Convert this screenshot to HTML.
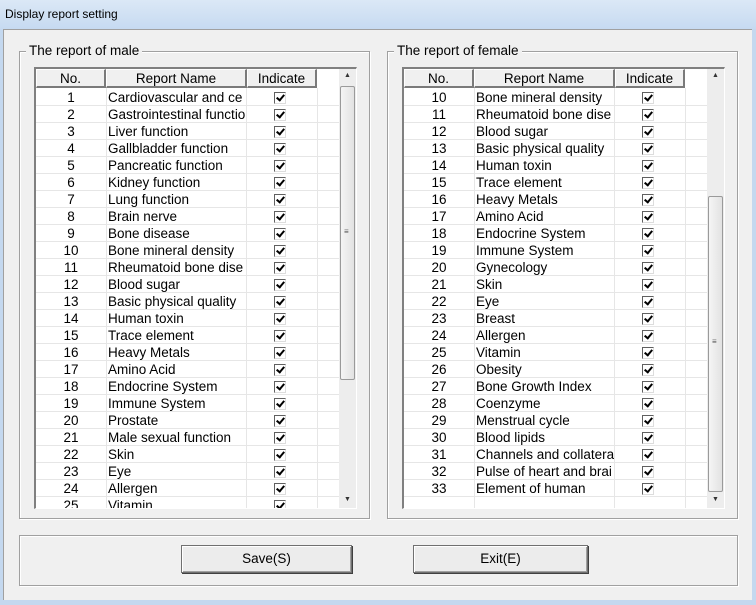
<!DOCTYPE html>
<html><head><meta charset="utf-8">
<style>
*{box-sizing:border-box;margin:0;padding:0}
body{width:756px;height:605px;overflow:hidden;background:#f0f0f0;font-family:"Liberation Sans",Arial,sans-serif;font-size:13px;color:#000;position:relative}
.title{position:absolute;left:0;top:0;width:756px;height:29px;background:linear-gradient(#dbe8f6,#c6daf1);}
.title span{position:absolute;left:5px;top:7px;font-size:12px}
.bl{position:absolute;left:0;top:29px;width:3px;height:576px;background:#c4d8ef}
.br{position:absolute;right:0;top:29px;width:4px;height:576px;background:#c4d8ef}
.bb{position:absolute;left:0;top:600px;width:756px;height:5px;background:#c4d8ef}
.inner{position:absolute;left:3px;top:29px;width:749px;height:571px;border-left:1px solid #a0a0a0;border-top:1px solid #a0a0a0}
.grp{position:absolute;border:1px solid #a0a0a0;box-shadow:inset 1px 1px 0 #fff,1px 1px 0 #fff}
.gt{position:absolute;top:-9px;left:6px;background:#f0f0f0;padding:0 3px;font-size:13.5px}
.grid{position:absolute;width:323px;height:442px;background:#fff;border-left:2px solid #808080;border-top:2px solid #808080;border-right:1px solid #fff;border-bottom:1px solid #fff;overflow:hidden}
.hdr{position:absolute;left:0;top:0;height:19px;width:281px;background:#f0f0f0;}
.hc{position:absolute;top:0;height:19px;text-align:center;line-height:18px;border-right:2px solid #7a7a7a;border-bottom:2px solid #7a7a7a;border-left:1px solid #fff;border-top:1px solid #fff;font-size:13.5px;background:#f0f0f0}
.row{position:absolute;left:0;height:17px;width:303px;border-bottom:1px solid #e6e6e6}
.row span{position:absolute;top:0;line-height:17px;font-size:13.5px}
.n{left:0;width:70px;text-align:center}
.nm{left:72px;width:138px;white-space:nowrap;overflow:hidden}
.cb{position:absolute;left:238px;top:3px;width:12px;height:12px;border:1px solid #606060;border-right-color:#ddd;border-bottom-color:#ddd;background:#fff}
.cb::after{content:"";position:absolute;left:3px;top:0px;width:3px;height:6px;border-right:2.5px solid #000;border-bottom:2.5px solid #000;transform:rotate(40deg)}
.vl{position:absolute;top:19px;width:1px;height:430px;background:#e6e6e6}
.sb{position:absolute;right:0;top:0;width:17px;height:440px;background:#ededed}
.thumb{position:absolute;left:1px;width:15px;background:linear-gradient(90deg,#f5f5f5,#e2e2e2);border:1px solid #9a9a9a;border-radius:2px}
.ar{position:absolute;left:5px;font-size:7px;color:#333}
.btn{position:absolute;top:545px;height:28px;border:1px solid #707070;background:#ececec;box-shadow:inset 1px 1px 0 #fff,inset -1px -1px 0 #a0a0a0,1px 1px 0 #404040;text-align:center;line-height:26px;font-size:13.5px}
</style></head><body>
<div class="title"><span>Display report setting</span></div>
<div class="bl"></div><div class="br"></div><div class="bb"></div>
<div class="inner"></div>

<div class="grp" style="left:19px;top:51px;width:351px;height:468px"><div class="gt">The report of male</div></div>
<div class="grp" style="left:387px;top:51px;width:351px;height:468px"><div class="gt">The report of female</div></div>
<div class="grp" style="left:19px;top:535px;width:719px;height:51px"></div>

<div class="grid" style="left:34px;top:67px">
<div class="hdr"></div>
<div class="vl" style="left:70px"></div><div class="vl" style="left:210px"></div><div class="vl" style="left:281px"></div>
<div class="row" style="top:20px"><span class="n">1</span><span class="nm">Cardiovascular and ce</span><div class="cb"></div></div>
<div class="row" style="top:37px"><span class="n">2</span><span class="nm">Gastrointestinal functio</span><div class="cb"></div></div>
<div class="row" style="top:54px"><span class="n">3</span><span class="nm">Liver function</span><div class="cb"></div></div>
<div class="row" style="top:71px"><span class="n">4</span><span class="nm">Gallbladder function</span><div class="cb"></div></div>
<div class="row" style="top:88px"><span class="n">5</span><span class="nm">Pancreatic function</span><div class="cb"></div></div>
<div class="row" style="top:105px"><span class="n">6</span><span class="nm">Kidney function</span><div class="cb"></div></div>
<div class="row" style="top:122px"><span class="n">7</span><span class="nm">Lung function</span><div class="cb"></div></div>
<div class="row" style="top:139px"><span class="n">8</span><span class="nm">Brain nerve</span><div class="cb"></div></div>
<div class="row" style="top:156px"><span class="n">9</span><span class="nm">Bone disease</span><div class="cb"></div></div>
<div class="row" style="top:173px"><span class="n">10</span><span class="nm">Bone mineral density</span><div class="cb"></div></div>
<div class="row" style="top:190px"><span class="n">11</span><span class="nm">Rheumatoid bone dise</span><div class="cb"></div></div>
<div class="row" style="top:207px"><span class="n">12</span><span class="nm">Blood sugar</span><div class="cb"></div></div>
<div class="row" style="top:224px"><span class="n">13</span><span class="nm">Basic physical quality</span><div class="cb"></div></div>
<div class="row" style="top:241px"><span class="n">14</span><span class="nm">Human toxin</span><div class="cb"></div></div>
<div class="row" style="top:258px"><span class="n">15</span><span class="nm">Trace element</span><div class="cb"></div></div>
<div class="row" style="top:275px"><span class="n">16</span><span class="nm">Heavy Metals</span><div class="cb"></div></div>
<div class="row" style="top:292px"><span class="n">17</span><span class="nm">Amino Acid</span><div class="cb"></div></div>
<div class="row" style="top:309px"><span class="n">18</span><span class="nm">Endocrine System</span><div class="cb"></div></div>
<div class="row" style="top:326px"><span class="n">19</span><span class="nm">Immune System</span><div class="cb"></div></div>
<div class="row" style="top:343px"><span class="n">20</span><span class="nm">Prostate</span><div class="cb"></div></div>
<div class="row" style="top:360px"><span class="n">21</span><span class="nm">Male sexual function</span><div class="cb"></div></div>
<div class="row" style="top:377px"><span class="n">22</span><span class="nm">Skin</span><div class="cb"></div></div>
<div class="row" style="top:394px"><span class="n">23</span><span class="nm">Eye</span><div class="cb"></div></div>
<div class="row" style="top:411px"><span class="n">24</span><span class="nm">Allergen</span><div class="cb"></div></div>
<div class="row" style="top:428px"><span class="n">25</span><span class="nm">Vitamin</span><div class="cb"></div></div>
<div class="hc" style="left:0;width:70px">No.</div>
<div class="hc" style="left:70px;width:141px">Report Name</div>
<div class="hc" style="left:211px;width:70px">Indicate</div>
<div class="sb"><span class="ar" style="top:3px">▲</span><div class="thumb" style="top:17px;height:294px"><span style="position:absolute;left:3px;top:140px;font-size:8px;color:#555">≡</span></div><span class="ar" style="top:427px">▼</span></div>
</div>

<div class="grid" style="left:402px;top:67px">
<div class="hdr"></div>
<div class="vl" style="left:70px"></div><div class="vl" style="left:210px"></div><div class="vl" style="left:281px"></div>
<div class="row" style="top:20px"><span class="n">10</span><span class="nm">Bone mineral density</span><div class="cb"></div></div>
<div class="row" style="top:37px"><span class="n">11</span><span class="nm">Rheumatoid bone dise</span><div class="cb"></div></div>
<div class="row" style="top:54px"><span class="n">12</span><span class="nm">Blood sugar</span><div class="cb"></div></div>
<div class="row" style="top:71px"><span class="n">13</span><span class="nm">Basic physical quality</span><div class="cb"></div></div>
<div class="row" style="top:88px"><span class="n">14</span><span class="nm">Human toxin</span><div class="cb"></div></div>
<div class="row" style="top:105px"><span class="n">15</span><span class="nm">Trace element</span><div class="cb"></div></div>
<div class="row" style="top:122px"><span class="n">16</span><span class="nm">Heavy Metals</span><div class="cb"></div></div>
<div class="row" style="top:139px"><span class="n">17</span><span class="nm">Amino Acid</span><div class="cb"></div></div>
<div class="row" style="top:156px"><span class="n">18</span><span class="nm">Endocrine System</span><div class="cb"></div></div>
<div class="row" style="top:173px"><span class="n">19</span><span class="nm">Immune System</span><div class="cb"></div></div>
<div class="row" style="top:190px"><span class="n">20</span><span class="nm">Gynecology</span><div class="cb"></div></div>
<div class="row" style="top:207px"><span class="n">21</span><span class="nm">Skin</span><div class="cb"></div></div>
<div class="row" style="top:224px"><span class="n">22</span><span class="nm">Eye</span><div class="cb"></div></div>
<div class="row" style="top:241px"><span class="n">23</span><span class="nm">Breast</span><div class="cb"></div></div>
<div class="row" style="top:258px"><span class="n">24</span><span class="nm">Allergen</span><div class="cb"></div></div>
<div class="row" style="top:275px"><span class="n">25</span><span class="nm">Vitamin</span><div class="cb"></div></div>
<div class="row" style="top:292px"><span class="n">26</span><span class="nm">Obesity</span><div class="cb"></div></div>
<div class="row" style="top:309px"><span class="n">27</span><span class="nm">Bone Growth Index</span><div class="cb"></div></div>
<div class="row" style="top:326px"><span class="n">28</span><span class="nm">Coenzyme</span><div class="cb"></div></div>
<div class="row" style="top:343px"><span class="n">29</span><span class="nm">Menstrual cycle</span><div class="cb"></div></div>
<div class="row" style="top:360px"><span class="n">30</span><span class="nm">Blood lipids</span><div class="cb"></div></div>
<div class="row" style="top:377px"><span class="n">31</span><span class="nm">Channels and collatera</span><div class="cb"></div></div>
<div class="row" style="top:394px"><span class="n">32</span><span class="nm">Pulse of heart and brai</span><div class="cb"></div></div>
<div class="row" style="top:411px"><span class="n">33</span><span class="nm">Element of human</span><div class="cb"></div></div>
<div class="hc" style="left:0;width:70px">No.</div>
<div class="hc" style="left:70px;width:141px">Report Name</div>
<div class="hc" style="left:211px;width:70px">Indicate</div>
<div class="sb"><span class="ar" style="top:3px">▲</span><div class="thumb" style="top:127px;height:296px"><span style="position:absolute;left:3px;top:140px;font-size:8px;color:#555">≡</span></div><span class="ar" style="top:427px">▼</span></div>
</div>

<div class="btn" style="left:181px;width:171px">Save(S)</div>
<div class="btn" style="left:413px;width:175px">Exit(E)</div>
</body></html>
